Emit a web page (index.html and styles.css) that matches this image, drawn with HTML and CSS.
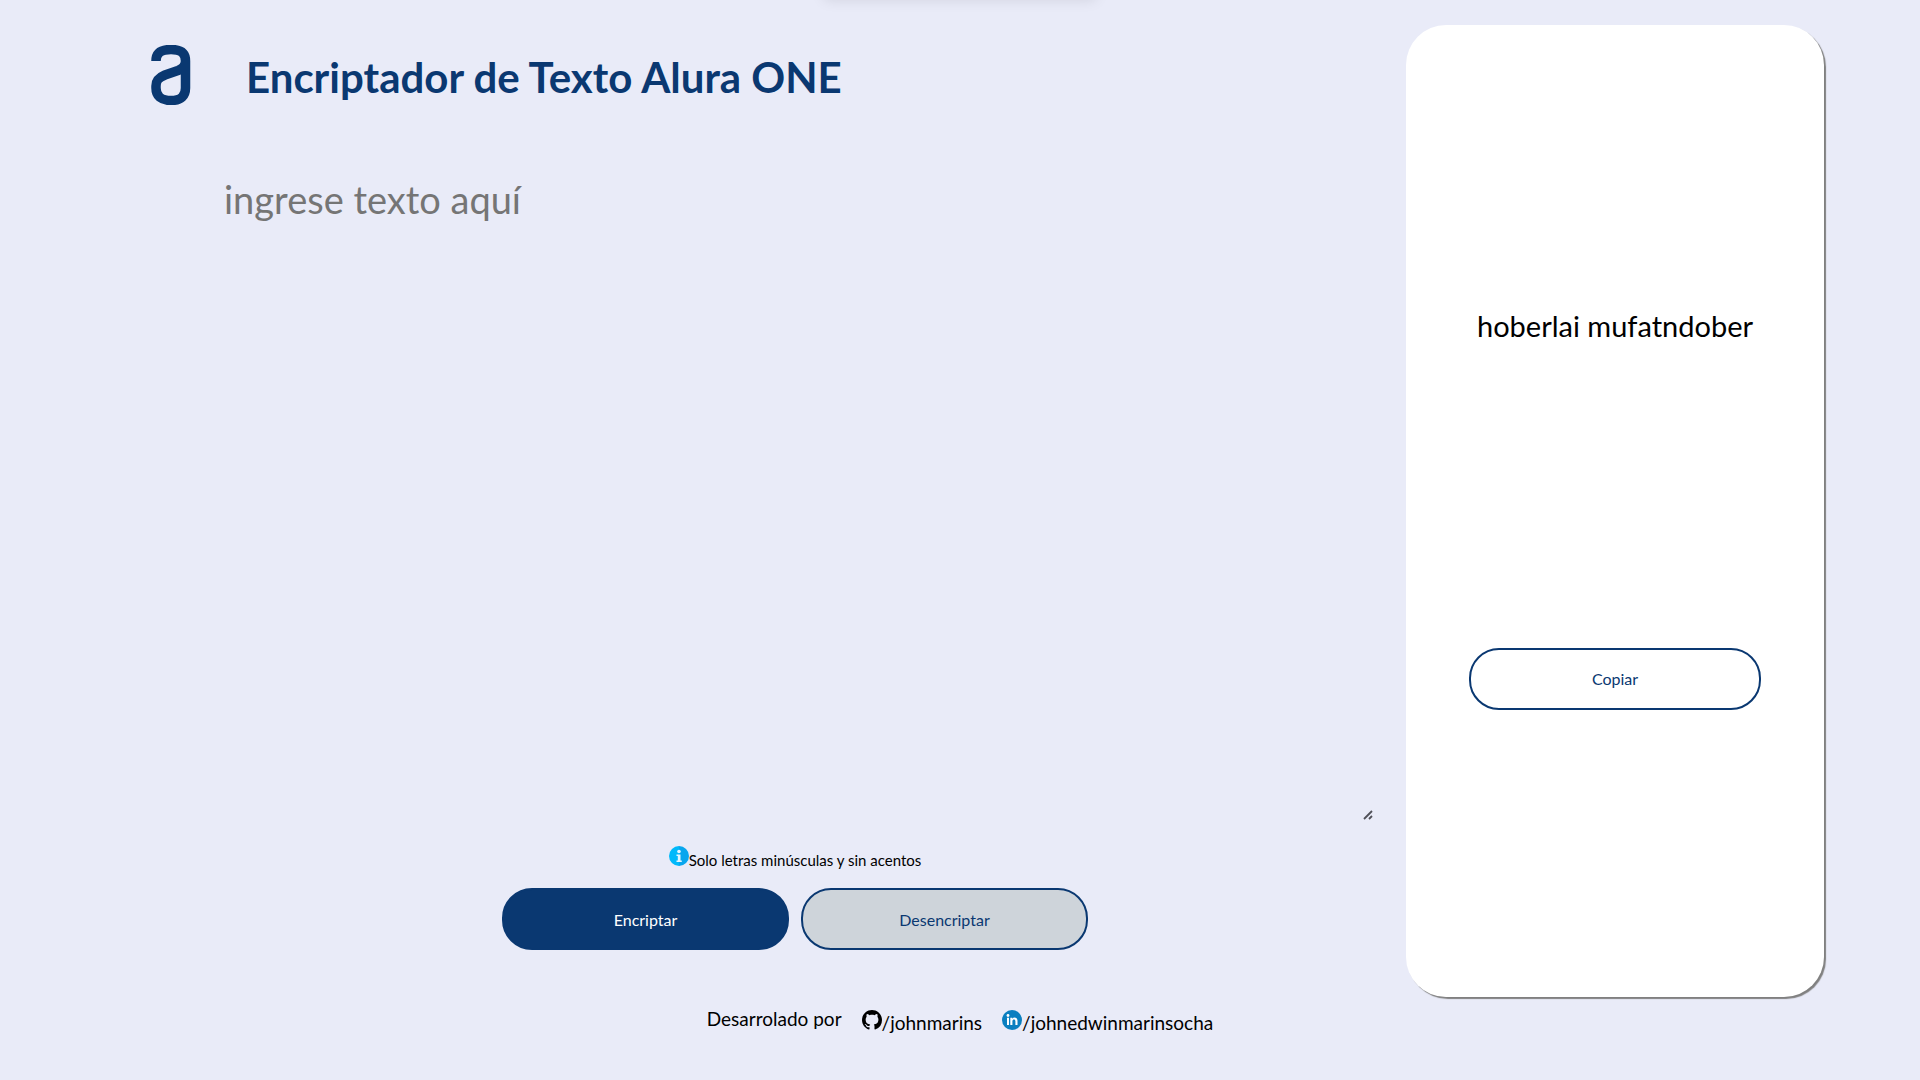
FILE: index.html
```
<!DOCTYPE html>
<html lang="es">
<head>
<meta charset="utf-8">
<meta name="viewport" content="width=device-width, initial-scale=1">
<title>Encriptador de Texto Alura ONE</title>
<link rel="stylesheet" href="styles.css">
</head>
<body>
<div class="top-shade"></div>
<main class="layout">
  <section class="panel">
    <header class="header">
      <svg class="logo" viewBox="0 0 40 60" role="img" aria-label="Alura">
        <path d="M5 16C5 8 10 4.500 20 4.500S34.500 8 34.500 16V43C34.500 51 30 55.500 20 55.500S5 51 5 43V41C5 35 8 32.500 14 30L27 25.500C31 24 34.500 21 34.500 16" fill="none" stroke="#0a3871" stroke-width="9.500"/>
      </svg>
      <h1 class="title">Encriptador de Texto Alura ONE</h1>
    </header>
    <div class="editor">
      <textarea class="input" aria-label="Texto" placeholder="ingrese texto aquí"></textarea>
      <p class="hint">
        <svg class="icon" viewBox="0 0 20 20" aria-hidden="true">
          <defs><linearGradient id="info"><stop offset="0.500" stop-color="#00b9fb"/><stop offset="0.500" stop-color="#08a6ee"/></linearGradient></defs>
          <circle cx="10" cy="10" r="10" fill="url(#info)"/>
          <circle cx="10" cy="5.500" r="1.800" fill="#e4f6ff"/>
          <path d="M7.500 8.500H11.500V14.500H12.800V16H7.500V14.500H8.800V10H7.500Z" fill="#e4f6ff"/>
        </svg><span>Solo letras minúsculas y sin acentos</span>
      </p>
      <div class="actions">
        <button class="btn btn-primary" type="button">Encriptar</button>
        <button class="btn btn-secondary" type="button">Desencriptar</button>
      </div>
    </div>
  </section>
  <aside class="result">
    <p class="output">hoberlai mufatndober</p>
    <button class="btn btn-copy" type="button">Copiar</button>
  </aside>
</main>
<footer class="footer">
  <p class="credit">Desarrolado por</p>
  <a class="social" href="#github"><svg class="icon" viewBox="0 0 16 16" aria-hidden="true"><path fill="#000" d="M8 0C3.580 0 0 3.580 0 8c0 3.540 2.290 6.530 5.470 7.590.4.070.55-.17.55-.38 0-.19-.01-.82-.01-1.490-2.010.37-2.530-.49-2.690-.94-.09-.23-.48-.94-.82-1.130-.28-.15-.68-.52-.01-.53.63-.01 1.080.58 1.230.82.72 1.210 1.870.87 2.330.66.07-.52.28-.87.51-1.070-1.780-.2-3.640-.89-3.640-3.950 0-.87.31-1.590.82-2.150-.08-.2-.36-1.020.08-2.120 0 0 .67-.21 2.200.82.64-.18 1.320-.27 2-.27s1.360.09 2 .27c1.530-1.040 2.200-.82 2.200-.82.44 1.100.16 1.920.08 2.120.51.56.82 1.270.82 2.150 0 3.070-1.870 3.750-3.650 3.950.29.25.54.73.54 1.480 0 1.070-.01 1.930-.01 2.200 0 .21.15.46.55.38A8 8 0 0 0 16 8c0-4.420-3.580-8-8-8z"/></svg><span>/johnmarins</span></a>
  <a class="social" href="#linkedin"><svg class="icon" viewBox="0 0 20 20" aria-hidden="true"><circle cx="10" cy="10" r="10" fill="#0a7fc0"/><circle cx="6" cy="5.500" r="1.400" fill="#fff"/><path d="M5 7.700H7V15H5ZM8.300 7.700H10.300V8.700C11.600 6.800 15.500 7.200 15.500 10.800V15H13.400V11.200C13.400 8.800 10.400 9 10.400 11.200V15H8.300Z" fill="#fff"/></svg><span>/johnedwinmarinsocha</span></a>
</footer>
</body>
</html>
```
FILE: styles.css
```
* { box-sizing: border-box; }

body {
  margin: 0;
  min-height: 100vh;
  display: flex;
  flex-direction: column;
  background: #e9ebf8;
  color: #000;
  font-family: Lato, sans-serif;
  overflow-x: hidden;
}

p, h1 { margin: 0; }

/* soft shade of a bar tucked above the window */
.top-shade {
  position: absolute;
  top: -20px;
  left: 50%;
  width: 272px;
  height: 18px;
  margin-left: -136px;
  box-shadow: 0 2px 14px rgba(0, 0, 0, 0.1);
}

.layout {
  flex: 1;
  display: grid;
  grid-template-columns: 1fr 418px;
  padding: 25px 5% 0 0;
}

.panel { display: flex; flex-direction: column; }

.header {
  display: flex;
  align-items: center;
  gap: 55px;
  padding: 20px 0 0 151px;
}

.logo { width: 40px; height: 60px; }

.title {
  padding-top: 4px;
  color: #0a3871;
  font-size: 42px;
  line-height: 56px;
  font-weight: 700;
}

.editor {
  flex: 1;
  display: flex;
  flex-direction: column;
  align-items: center;
  padding: 58px 32px 47px 216px;
}

.input {
  flex: 1;
  width: 100%;
  min-height: 300px;
  padding: 8px;
  border: 0;
  background: transparent;
  font-family: inherit;
  font-size: 38px;
  line-height: 56px;
  resize: both;
}

.input::placeholder { color: #757575; }

.input::-webkit-resizer {
  background: url("data:image/svg+xml,%3Csvg xmlns='http://www.w3.org/2000/svg' width='15' height='15'%3E%3Cpath d='M5 12L13 4M10 12L13 9' stroke='%23505058' stroke-width='1.800'/%3E%3C/svg%3E") no-repeat right bottom;
}

.hint {
  display: flex;
  align-items: flex-start;
  padding: 24px 0 16px;
  font-size: 15px;
  line-height: 24px;
}

.hint span { padding-top: 2px; }

.icon { flex: none; width: 20px; height: 20px; }

.actions { display: flex; gap: 12px; }

.btn {
  width: 287px;
  height: 62px;
  border: 2px solid #0a3871;
  border-radius: 30px;
  background: transparent;
  color: #0a3871;
  font-family: inherit;
  font-size: 16px;
}

.btn-primary { background: #0a3871; color: #fff; }
.btn-secondary { background: #ced4da; }
.btn-copy { width: 292px; }

.result {
  display: flex;
  flex-direction: column;
  align-items: center;
  justify-content: center;
  gap: 300px;
  padding-bottom: 9px;
  border-radius: 40px;
  background: #fff;
  box-shadow: 2px 2px 1px #808080;
}

.output { font-size: 29px; line-height: 44px; }

.footer {
  display: flex;
  justify-content: center;
  gap: 20px;
  padding: 7px 0 44px;
  font-size: 19px;
  line-height: 30px;
}

.social {
  display: flex;
  padding-top: 6px;
  color: inherit;
  text-decoration: none;
}

.social span { line-height: 26px; }
```
